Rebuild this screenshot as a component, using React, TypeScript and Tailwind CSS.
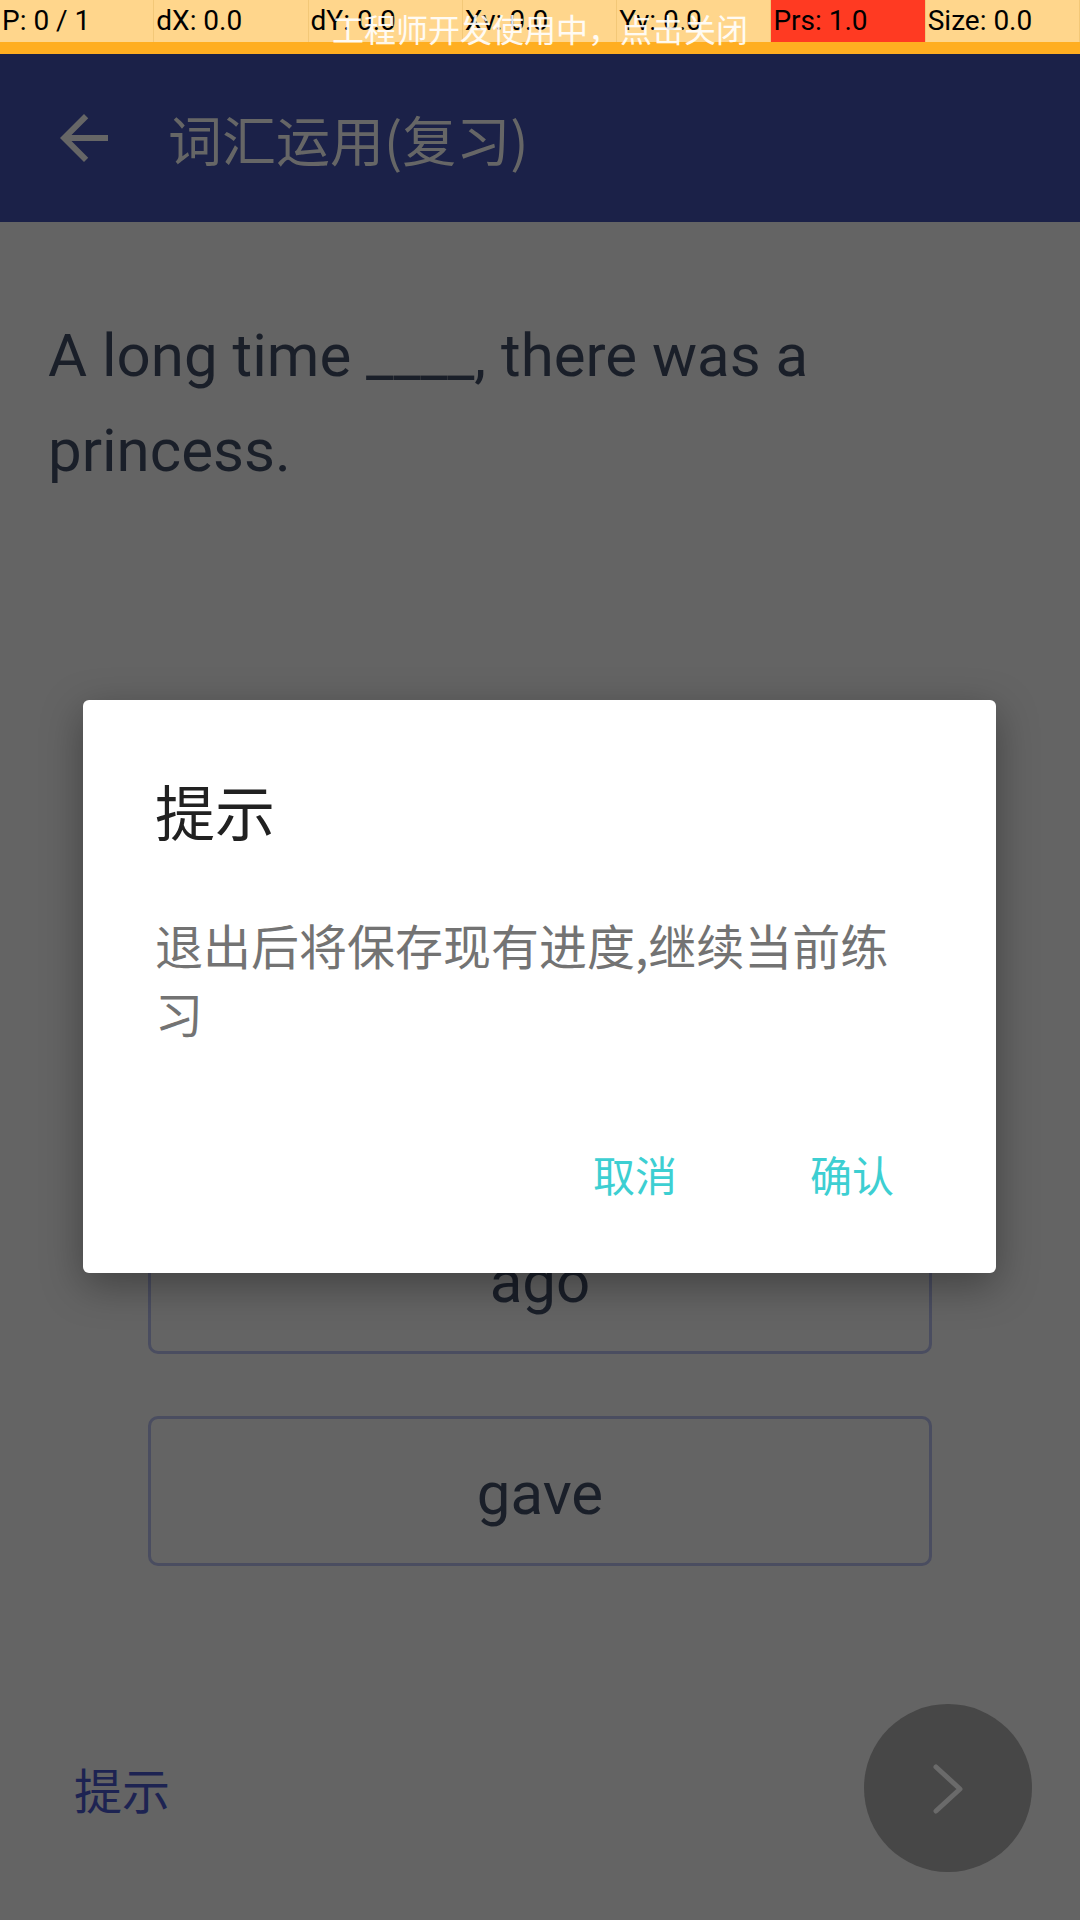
const cells = [
  { label: "P: 0 / 1", bg: "bg-[#FFD68C]" },
  { label: "dX: 0.0", bg: "bg-[#FFD68C]" },
  { label: "dY: 0.0", bg: "bg-[#FFD68C]" },
  { label: "Xv: 0.0", bg: "bg-[#FFD68C]" },
  { label: "Yv: 0.0", bg: "bg-[#FFD68C]" },
  { label: "Prs: 1.0", bg: "bg-[#FF3A22]" },
  { label: "Size: 0.0", bg: "bg-[#FFD68C]" },
];

const options = ["before", "since", "ago", "gave"];

const cjk = "font-['Noto_Sans_CJK_SC','Noto_Sans',sans-serif]";
const latin = "font-['Roboto','Noto_Sans_CJK_SC',sans-serif]";

function DebugBar() {
  return (
    <div className="relative h-[54px] bg-[#FFAE21]">
      <div className="grid grid-cols-7 h-[37px]">
        {cells.map((c) => (
          <div key={c.label} className={`${c.bg} border-r border-[#F3C878] flex items-center pl-[2px] text-[28px] text-black ${latin}`}>
            {c.label}
          </div>
        ))}
      </div>
      {/* dev overlay label sits on top of the bar */}
      <div className={`absolute left-0 right-0 top-[7px] text-center text-[32px] leading-[42px] text-white/90 ${cjk}`}>
        工程师开发使用中，点击关闭
      </div>
    </div>
  );
}

function Header() {
  return (
    <div className="h-[168px] bg-[#1B2148] flex items-center pl-[48px]">
      <svg width="72" height="72" viewBox="0 0 24 24" className="shrink-0">
        <path d="M20 11H7.83l5.59-5.59L12 4l-8 8 8 8 1.41-1.41L7.83 13H20v-2z" fill="#666666" />
      </svg>
      <div className={`ml-[48px] text-[54px] text-[#666666] ${cjk}`}>词汇运用(复习)</div>
    </div>
  );
}

function Dialog() {
  return (
    <div className="absolute left-[83px] top-[700px] w-[913px] h-[573px] bg-white rounded-md shadow-[0_12px_40px_rgba(0,0,0,0.35)] px-[72px] pt-[80px]">
      <div className={`text-[60px] leading-none text-[#212121] ${cjk}`}>提示</div>
      <div className={`mt-[70px] text-[48px] leading-[68px] text-[#737373] ${cjk}`}>
        退出后将保存现有进度,继续当前练
        <br />
        习
      </div>
      <div className={`mt-[107px] mr-[30px] flex justify-end gap-[133px] text-[42px] leading-none text-[#3DCFD2] ${cjk}`}>
        <button>取消</button>
        <button>确认</button>
      </div>
    </div>
  );
}

export default function App() {
  return (
    <div className="relative w-[1080px] h-[1920px] overflow-hidden bg-[#646464] flex flex-col">
      <DebugBar />
      <Header />

      <div className={`px-[48px] pt-[86px] text-[60px] leading-[95px] text-[#1A1F29] ${latin}`}>
        A long time ____, there was a princess.
      </div>

      <div className="mt-[282px] px-[148px] flex flex-col gap-[62px]">
        {options.map((o) => (
          <div key={o} className={`h-[150px] rounded-[10px] border-[3px] border-[#4A4D60] flex items-center justify-center pt-[6px] text-[60px] text-[#1A1F29] ${latin}`}>
            {o}
          </div>
        ))}
      </div>

      <div className="mt-auto pb-[48px] pr-[48px] pl-[74px] flex items-center justify-between">
        <div className={`text-[48px] text-[#1D2352] ${cjk}`}>提示</div>
        <button className="w-[168px] h-[168px] rounded-full bg-[#474747] flex items-center justify-center">
          <svg width="168" height="168" viewBox="0 0 168 168">
            <polyline points="72,63 96,85 72,107" fill="none" stroke="#6A6A6A" strokeWidth="5" strokeLinecap="round" strokeLinejoin="round" />
          </svg>
        </button>
      </div>

      <Dialog />
    </div>
  );
}
